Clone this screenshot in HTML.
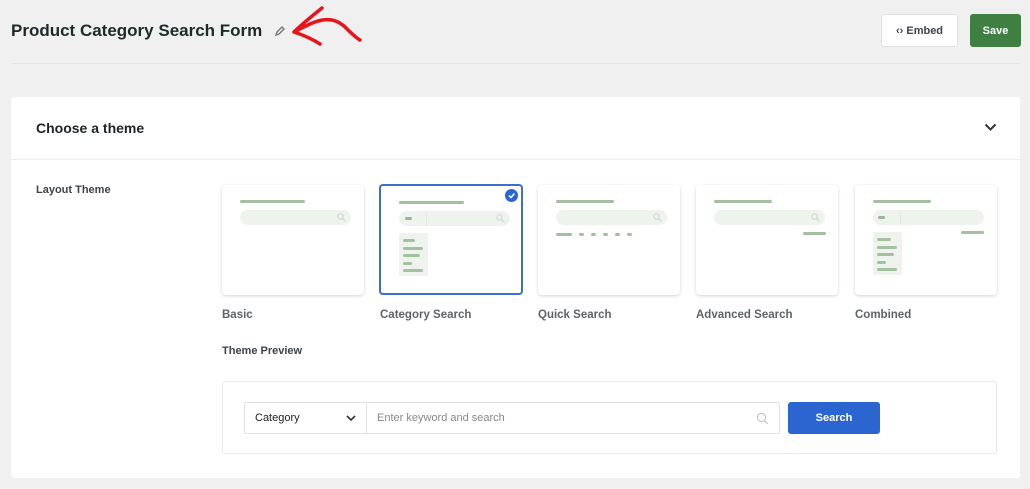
<!DOCTYPE html>
<html><head><meta charset="utf-8"><style>
*{box-sizing:border-box;margin:0;padding:0}
body{width:1030px;height:489px;background:#f0f0f1;font-family:"Liberation Sans",sans-serif;position:relative;overflow:hidden;color:#1d2327}
.a{position:absolute}
.title{left:11px;top:21px;font-size:17px;font-weight:bold;color:#1e2a2a}
.hl{left:11px;top:63px;width:1009px;height:1px;background:#e4e4e4}
.btn{border-radius:3px;font-size:11px;font-weight:bold;display:flex;align-items:center;justify-content:center}
.panel{left:11px;top:97px;width:1009px;height:381px;background:#fff;border-radius:3px}
.card{width:142px;height:110px;background:#fff;border-radius:4px;box-shadow:0 1px 3px rgba(0,0,0,.18)}
.g{position:absolute;background:#a3c1a0;height:3px;border-radius:2px}
.bar{position:absolute;left:18px;top:25px;width:111px;height:15px;background:#eef3ee;border-radius:8px}
.bar svg{position:absolute;right:5px;top:3px}
.dv{position:absolute;left:27px;top:0;width:1px;height:15px;background:#e2e9e2}
.lab{font-size:11.5px;font-weight:bold;color:#5d6468;top:309px}
.list{position:absolute;left:20px;top:47px;width:29px;height:43px;background:#eef3ee;border-radius:2px}
</style></head><body>
<div class="a title">Product Category Search Form</div>
<svg class="a" style="left:274px;top:25px" width="12" height="12" viewBox="0 0 12 12"><path d="M2 10l1-3 5-5 2 2-5 5z" fill="none" stroke="#777" stroke-width="1.4"/></svg>
<svg class="a" style="left:288px;top:4px" width="78" height="44" viewBox="0 0 78 44"><path d="M6 28C22 20 40 8 56 22C62 28 68 34 72 36M6 28C14 20 24 12 34 4M6 28C18 32 26 36 32 40" fill="none" stroke="#e8141c" stroke-width="3.5" stroke-linecap="round"/></svg>
<div class="a hl"></div>
<div class="a btn" style="left:881px;top:14px;width:77px;height:33px;background:#fff;border:1px solid #e0e0e0;color:#3c434a">‹› Embed</div>
<div class="a btn" style="left:970px;top:14px;width:51px;height:33px;background:#3f7f41;color:#fff">Save</div>
<div class="a panel"></div>
<div class="a" style="left:36px;top:120px;font-size:14px;font-weight:bold">Choose a theme</div>
<svg class="a" style="left:984px;top:123px" width="13" height="9" viewBox="0 0 13 9"><path d="M1.5 1.5l5 5 5-5" fill="none" stroke="#333" stroke-width="2"/></svg>
<div class="a" style="left:11px;top:159px;width:1009px;height:1px;background:#ececec"></div>
<div class="a" style="left:36px;top:184px;font-size:11px;font-weight:bold;color:#3c434a">Layout Theme</div>

<div class="a card" style="left:222px;top:185px"><div class="g" style="left:18px;top:15px;width:65px"></div><div class="bar"><svg width="9" height="9"><circle cx="3.5" cy="3.5" r="2.7" stroke="#ccd5cc" fill="none"/><path d="M5.5 5.5l3 3" stroke="#ccd5cc"/></svg></div></div>
<div class="a card" style="left:379px;top:184px;width:144px;height:111px;border:2px solid #3a6fcf;box-shadow:none"><div class="g" style="left:18px;top:15px;width:65px"></div><div class="bar"><div class="g" style="left:6px;top:6px;width:7px;background:#9bb59a"></div><div class="dv"></div><svg width="9" height="9"><circle cx="3.5" cy="3.5" r="2.7" stroke="#ccd5cc" fill="none"/><path d="M5.5 5.5l3 3" stroke="#ccd5cc"/></svg></div><div class="list" style="left:18px"><div class="g" style="left:4px;top:6px;width:12px"></div><div class="g" style="left:4px;top:14px;width:20px"></div><div class="g" style="left:4px;top:21px;width:17px"></div><div class="g" style="left:4px;top:29px;width:9px"></div><div class="g" style="left:4px;top:36px;width:20px"></div></div>
<div class="a" style="right:3px;top:3px;width:13px;height:13px;border-radius:50%;background:#2a64d3"><svg width="13" height="13"><path d="M4 6.5l2 2 3.5-4" stroke="#fff" stroke-width="1.5" fill="none"/></svg></div></div>
<div class="a card" style="left:538px;top:185px"><div class="g" style="left:18px;top:15px;width:58px"></div><div class="bar"><svg width="9" height="9"><circle cx="3.5" cy="3.5" r="2.7" stroke="#ccd5cc" fill="none"/><path d="M5.5 5.5l3 3" stroke="#ccd5cc"/></svg></div><div class="g" style="left:18px;top:48px;width:16px"></div><div class="g" style="left:41px;top:48px;width:5px"></div><div class="g" style="left:53px;top:48px;width:5px"></div><div class="g" style="left:65px;top:48px;width:5px"></div><div class="g" style="left:77px;top:48px;width:5px"></div><div class="g" style="left:89px;top:48px;width:5px"></div></div>
<div class="a card" style="left:696px;top:185px"><div class="g" style="left:18px;top:15px;width:58px"></div><div class="bar"><svg width="9" height="9"><circle cx="3.5" cy="3.5" r="2.7" stroke="#ccd5cc" fill="none"/><path d="M5.5 5.5l3 3" stroke="#ccd5cc"/></svg></div><div class="g" style="left:107px;top:47px;width:23px"></div></div>
<div class="a card" style="left:855px;top:185px"><div class="g" style="left:18px;top:15px;width:58px"></div><div class="bar"><div class="g" style="left:5px;top:6px;width:7px;background:#9bb59a"></div><div class="dv"></div></div><div class="g" style="left:106px;top:46px;width:23px"></div><div class="list" style="left:18px"><div class="g" style="left:4px;top:6px;width:14px"></div><div class="g" style="left:4px;top:14px;width:20px"></div><div class="g" style="left:4px;top:21px;width:17px"></div><div class="g" style="left:4px;top:29px;width:9px"></div><div class="g" style="left:4px;top:36px;width:20px"></div></div></div>

<div class="a lab" style="left:222px">Basic</div>
<div class="a lab" style="left:380px">Category Search</div>
<div class="a lab" style="left:538px">Quick Search</div>
<div class="a lab" style="left:696px">Advanced Search</div>
<div class="a lab" style="left:855px">Combined</div>
<div class="a" style="left:222px;top:345px;font-size:11px;font-weight:bold;color:#3c434a">Theme Preview</div>
<div class="a" style="left:222px;top:381px;width:775px;height:73px;border:1px solid #e8e8e8;border-radius:3px"></div>
<div class="a" style="left:244px;top:402px;width:536px;height:32px;border:1px solid #e2e2e2;border-radius:2px;display:flex;font-size:11px">
<div style="width:122px;border-right:1px solid #e2e2e2;display:flex;align-items:center;justify-content:space-between;padding:0 10px;color:#222">Category<svg width="10" height="7"><path d="M1 1l4 4 4-4" stroke="#333" stroke-width="1.6" fill="none"/></svg></div>
<div style="flex:1;display:flex;align-items:center;justify-content:space-between;padding:0 10px;color:#888">Enter keyword and search<svg width="13" height="13"><circle cx="5.5" cy="5.5" r="4" stroke="#bbb" fill="none"/><path d="M8.5 8.5l3.5 3.5" stroke="#bbb"/></svg></div></div>
<div class="a btn" style="left:788px;top:402px;width:92px;height:32px;background:#2b66d0;color:#fff">Search</div>
</body></html>
